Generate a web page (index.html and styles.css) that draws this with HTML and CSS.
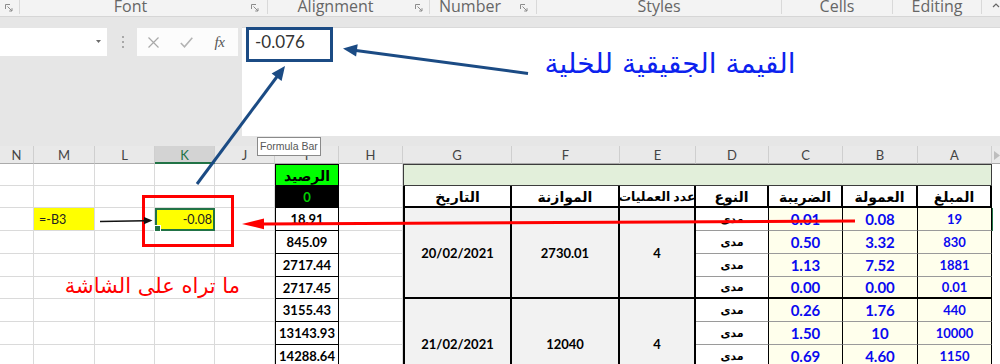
FILE: index.html
```html
<!DOCTYPE html>
<html lang="ar">
<head>
<meta charset="utf-8">
<title>Excel</title>
<link rel="stylesheet" href="styles.css">
</head>
<body>
<div class="ribbon">
  <div class="grp g0"><svg class="lnch" width="8" height="8" viewBox="0 0 8 8"><path d="M0.5 5V0.5H5" /><path d="M2.5 2.5L7 7M7 4.2V7H4.2" /></svg></div>
  <div class="grp g-font"><span class="lbl">Font</span><span class="lz"><svg class="lnch" width="8" height="8" viewBox="0 0 8 8"><path d="M0.5 5V0.5H5" /><path d="M2.5 2.5L7 7M7 4.2V7H4.2" /></svg></span></div>
  <div class="grp g-align"><span class="lbl">Alignment</span><span class="lz"><svg class="lnch" width="8" height="8" viewBox="0 0 8 8"><path d="M0.5 5V0.5H5" /><path d="M2.5 2.5L7 7M7 4.2V7H4.2" /></svg></span></div>
  <div class="grp g-num"><span class="lbl">Number</span><span class="lz"><svg class="lnch" width="8" height="8" viewBox="0 0 8 8"><path d="M0.5 5V0.5H5" /><path d="M2.5 2.5L7 7M7 4.2V7H4.2" /></svg></span></div>
  <div class="grp g-styles"><span class="lbl">Styles</span></div>
  <div class="grp g-cells"><span class="lbl">Cells</span></div>
  <div class="grp g-edit"><span class="lbl">Editing</span></div>
  <div class="grp g-tail"><svg class="caret" width="8" height="6" viewBox="0 0 8 6"><path d="M1 5L4 2L7 5" /></svg></div>
</div>
<div class="strip"></div>
<div class="fxbar">
  <div class="fx-left">
    <div class="fx-row">
      <div class="namebox"><svg width="5" height="3" viewBox="0 0 5 3"><path d="M0 0H5L2.5 3Z" fill="#6b6b6b"/></svg></div>
      <div class="dots"><svg width="2" height="12" viewBox="0 0 2 12"><rect x="0" y="0" width="2" height="2" fill="#a8a8a8"/><rect x="0" y="5" width="2" height="2" fill="#a8a8a8"/><rect x="0" y="10" width="2" height="2" fill="#a8a8a8"/></svg></div>
      <div class="btns">
        <span class="btn"><svg width="11" height="11" viewBox="0 0 11 11"><path d="M0.5 0.5L10.5 10.5M10.5 0.5L0.5 10.5" stroke="#a9a9a9" stroke-width="1.2" fill="none"/></svg></span>
        <span class="btn"><svg width="13" height="11" viewBox="0 0 13 11"><path d="M0.8 6L4.5 9.8L12.3 0.8" stroke="#b3b3b3" stroke-width="1.6" fill="none"/></svg></span>
        <span class="btn fx">fx</span>
      </div>
    </div>
  </div>
  <div class="fx-input"><span class="fx-val">-0.076</span></div>
</div>
<div class="strip"></div>

<div class="sheet">
  <!-- column headers -->
  <div class="hd">N</div><div class="hd">M</div><div class="hd">L</div><div class="hd act">K</div><div class="hd">J</div><div class="hd">I</div><div class="hd">H</div><div class="hd">G</div><div class="hd">F</div><div class="hd">E</div><div class="hd">D</div><div class="hd">C</div><div class="hd">B</div><div class="hd">A</div><div class="hd corner"><svg width="6" height="9" viewBox="0 0 6 9"><path d="M0 0L6 4.5L0 9Z" fill="#bdbdbd"/></svg></div>

  <!-- row 1 -->
  <div class="c"></div><div class="c"></div><div class="c"></div><div class="c"></div><div class="c"></div>
  <div class="bal bal-h">الرصيد</div><div class="c"></div>
  <div class="title"></div><div class="edge"></div>

  <!-- row 2 -->
  <div class="c"></div><div class="c"></div><div class="c"></div><div class="c"></div><div class="c"></div>
  <div class="bal bal-0">0</div><div class="c"></div>
  <div class="th first">التاريخ</div><div class="th">الموازنة</div><div class="th sm">عدد العمليات</div><div class="th">النوع</div><div class="th">الضريبة</div><div class="th">العمولة</div><div class="th">المبلغ</div><div class="edge"></div>

  <!-- row 3 -->
  <div class="c"></div><div class="c ym">=-B3</div><div class="c"></div><div class="c yk">-0.08</div><div class="c"></div>
  <div class="bal">18.91</div><div class="c"></div>
  <div class="mg first">20/02/2021</div><div class="mg">2730.01</div><div class="mg">4</div>
  <div class="typ">مدى</div><div class="val">0.01</div><div class="val">0.08</div><div class="amt">19</div><div class="edge sel"></div>

  <!-- row 4 -->
  <div class="c"></div><div class="c"></div><div class="c"></div><div class="c"></div><div class="c"></div>
  <div class="bal">845.09</div><div class="c"></div>
  <div class="typ">مدى</div><div class="val">0.50</div><div class="val">3.32</div><div class="amt">830</div><div class="edge"></div>

  <!-- row 5 -->
  <div class="c"></div><div class="c"></div><div class="c"></div><div class="c"></div><div class="c"></div>
  <div class="bal">2717.44</div><div class="c"></div>
  <div class="typ">مدى</div><div class="val">1.13</div><div class="val">7.52</div><div class="amt">1881</div><div class="edge"></div>

  <!-- row 6 -->
  <div class="c"></div><div class="c"></div><div class="c"></div><div class="c"></div><div class="c"></div>
  <div class="bal">2717.45</div><div class="c"></div>
  <div class="typ end">مدى</div><div class="val end">0.00</div><div class="val end">0.00</div><div class="amt end">0.01</div><div class="edge"></div>

  <!-- row 7 -->
  <div class="c"></div><div class="c"></div><div class="c"></div><div class="c"></div><div class="c"></div>
  <div class="bal">3155.43</div><div class="c"></div>
  <div class="mg first">21/02/2021</div><div class="mg">12040</div><div class="mg">4</div>
  <div class="typ">مدى</div><div class="val">0.26</div><div class="val">1.76</div><div class="amt">440</div><div class="edge"></div>

  <!-- row 8 -->
  <div class="c"></div><div class="c"></div><div class="c"></div><div class="c"></div><div class="c"></div>
  <div class="bal">13143.93</div><div class="c"></div>
  <div class="typ">مدى</div><div class="val">1.50</div><div class="val">10</div><div class="amt">10000</div><div class="edge"></div>

  <!-- row 9 -->
  <div class="c"></div><div class="c"></div><div class="c"></div><div class="c"></div><div class="c"></div>
  <div class="bal">14288.64</div><div class="c"></div>
  <div class="typ">مدى</div><div class="val">0.69</div><div class="val">4.60</div><div class="amt">1150</div><div class="edge"></div>

  <!-- row 10 -->
  <div class="c"></div><div class="c"></div><div class="c"></div><div class="c"></div><div class="c"></div>
  <div class="bal"></div><div class="c"></div>
  <div class="typ end"></div><div class="val end"></div><div class="val end"></div><div class="amt end"></div><div class="edge"></div>
</div>

<div class="tip">Formula Bar</div>

<svg class="ann" width="1000" height="364" viewBox="0 0 1000 364">
  <g fill="#1b4b84" stroke="#1b4b84">
    <line x1="528" y1="73.5" x2="356" y2="50.5" stroke-width="3"/>
    <polygon points="343,48.5 357.7,44.2 356.1,56.5" stroke="none"/>
    <line x1="197" y1="184" x2="277.5" y2="76" stroke-width="3"/>
    <polygon points="285,66 281.6,81 271.6,73.6" stroke="none"/>
  </g>
  <rect x="143.5" y="196.5" width="89" height="49" fill="none" stroke="#ff0000" stroke-width="3"/>
  <line x1="855" y1="221" x2="262" y2="223.9" stroke="#ff0000" stroke-width="3"/>
  <polygon points="242,224 264,218.6 264,229.2" fill="#ff0000"/>
  <line x1="100" y1="221.5" x2="145" y2="220.7" stroke="#111" stroke-width="1.6"/>
  <polygon points="152.5,220.5 144,217 144,224.2" fill="#111"/>
</svg>

<div class="note note-blue" dir="rtl">القيمة الجقيقية للخلية</div>
<div class="note note-red" dir="rtl">ما تراه على الشاشة</div>
</body>
</html>
```
FILE: styles.css
```css
* { box-sizing: border-box; }
html, body {
  margin: 0;
  padding: 0;
  width: 1000px;
  height: 364px;
  overflow: hidden;
  background: #ffffff;
}
body {
  position: relative;
  font-family: Lato, "DejaVu Sans", sans-serif;
  color: #000;
}

/* ---------- ribbon ---------- */
.ribbon {
  display: flex;
  height: 17px;
  background: #f3f3f3;
  border-bottom: 1px solid #d6d6d6;
  overflow: hidden;
  font-family: "Open Sans", "Noto Sans", sans-serif;
  font-size: 16px;
  color: #666666;
}
.grp {
  display: flex;
  height: 14px;
  border-right: 1px solid #d9d9d9;
  flex: none;
}
.lbl {
  flex: 1;
  text-align: center;
  line-height: 17px;
  margin-top: -2px;
  white-space: nowrap;
}
.lz { width: 26px; flex: none; display: flex; padding-top: 4px; }
.lnch { fill: none; stroke: #8c8c8c; stroke-width: 1; }
.g0 { width: 20px; padding: 4px 0 0 5px; }
.g-font { width: 248px; }
.g-font .lz svg { margin-left: 10px; }
.g-align { width: 162px; }
.g-align .lz svg { margin-left: 12px; }
.g-num { width: 107px; }
.g-num .lz svg { margin-left: 10px; }
.g-styles { width: 245px; }
.g-cells { width: 111px; }
.g-edit { width: 89px; }
.g-tail { width: 18px; border-right: none; padding: 2px 0 0 10px; }
.caret { fill: none; stroke: #666; stroke-width: 1.2; }

.strip { height: 10px; background: #e6e6e6; }

/* ---------- formula bar ---------- */
.fxbar { display: flex; height: 109px; }
.fx-left { width: 242px; flex: none; background: #e6e6e6; padding-top: 1px; }
.fx-row { display: flex; height: 28px; }
.namebox {
  width: 107px;
  background: #ffffff;
  display: flex;
  justify-content: flex-end;
  align-items: center;
  padding: 0 6px 1px 0;
}
.dots { width: 30px; display: flex; justify-content: center; align-items: center; padding-left: 1px; }
.btns { width: 101px; background: #fcfcfc; display: flex; }
.btn { width: 33px; display: flex; justify-content: center; align-items: center; }
.fx {
  font-family: "Liberation Serif", "DejaVu Serif", serif;
  font-style: italic;
  font-size: 15px;
  color: #555;
  letter-spacing: -0.5px;
}
.fx-input {
  flex: 1;
  background: #ffffff;
  border-top: 1px solid #dadada;
  padding-left: 4px;
}
.fx-val {
  display: inline-block;
  width: 87px;
  height: 35px;
  margin-top: -1px;
  border: 3px solid #1b4b84;
  padding: 2px 0 0 6px;
  font-family: Lato, sans-serif;
  font-size: 17px;
  line-height: 20px;
  color: #333;
}

/* ---------- sheet ---------- */
.sheet {
  display: grid;
  grid-template-columns: 34px 61px 60px 60px 60px 64px 64px 109px 108px 76px 73px 74px 75px 74px 8px;
  grid-template-rows: 18px 22px 22px 23px 23px 23px 22px 23px 23px 23px 23px;
}
.hd {
  background: #e9e9e9;
  border-right: 1px solid #cfcfcf;
  border-bottom: 1px solid #ababab;
  font-size: 13px;
  color: #444;
  display: flex;
  justify-content: center;
  align-items: center;
  padding-top: 1px;
}
.hd.act {
  background: #d3d3d3;
  color: #217346;
  border-bottom: 2px solid #217346;
}
.hd.corner { border-right: none; justify-content: flex-start; padding: 2px 0 0 2px; }

.c {
  border-right: 1px solid #dadada;
  border-bottom: 1px solid #dadada;
  font-size: 12.5px;
  color: #222;
  display: flex;
  align-items: center;
}
.ym { background: #ffff00; padding-left: 5px; }
.yk {
  position: relative;
  background: #ffff00;
  border: 2px solid #217346;
  justify-content: flex-end;
  padding-right: 1px;
}
.yk::after {
  content: "";
  position: absolute;
  left: -3px;
  bottom: -3px;
  width: 5px;
  height: 5px;
  background: #217346;
  border: 1px solid #ffffff;
}
.edge { background: #ffffff; }
.edge.sel { border-left: 1px solid #217346; }

.bal {
  border-left: 1px solid #000;
  border-right: 1px solid #000;
  border-bottom: 1px solid #000;
  background: #ffffff;
  font-weight: 700;
  font-size: 13px;
  display: flex;
  justify-content: center;
  align-items: center;
  white-space: nowrap;
}
.bal-h {
  background: #00ff00;
  border-top: 1px solid #000;
  font-size: 14px;
}
.bal-0 { background: #000; color: #00d000; font-size: 13px; }

.title {
  grid-column: span 7;
  background: #e2efda;
  border: 1px solid #3c3c3c;
}
.th {
  background: #ffffff;
  border-right: 2px solid #000;
  border-bottom: 2px solid #000;
  font-weight: 700;
  font-size: 14px;
  display: flex;
  justify-content: center;
  align-items: center;
  white-space: nowrap;
  overflow: hidden;
}
.th.first, .mg.first { border-left: 2px solid #000; }
.th.sm { font-size: 12.5px; }
.mg {
  grid-row: span 4;
  background: #f2f2f2;
  border-right: 2px solid #000;
  border-bottom: 2px solid #000;
  font-weight: 700;
  font-size: 13px;
  display: flex;
  justify-content: center;
  align-items: center;
}
.typ, .val, .amt {
  border-right: 1px solid #000;
  border-bottom: 1px solid #9a9a9a;
  display: flex;
  justify-content: center;
  align-items: center;
  font-weight: 700;
}
.typ { background: #ffffff; font-size: 11px; }
.val { background: #ffffec; color: #0a0af0; font-size: 15px; }
.amt { background: #ffffec; color: #0a0af0; font-size: 13px; }
.end { border-bottom: 2px solid #000; }

/* ---------- overlays ---------- */
.tip {
  position: absolute;
  left: 257px;
  top: 137px;
  height: 19px;
  background: #ffffff;
  border: 1px solid #8a8a8a;
  font-family: "Liberation Sans", sans-serif;
  font-size: 10.5px;
  line-height: 17px;
  color: #575757;
  padding: 0 2px;
  white-space: nowrap;
}
.ann { position: absolute; left: 0; top: 0; pointer-events: none; }
.note {
  position: absolute;
  font-family: "DejaVu Sans", sans-serif;
  line-height: 1;
  white-space: nowrap;
  text-align: center;
}
.note-blue { left: 540px; top: 50px; width: 260px; font-size: 28px; color: #0c22ee; }
.note-red { left: 68px; top: 276px; width: 172px; font-size: 21px; color: #ff0000; }
```
